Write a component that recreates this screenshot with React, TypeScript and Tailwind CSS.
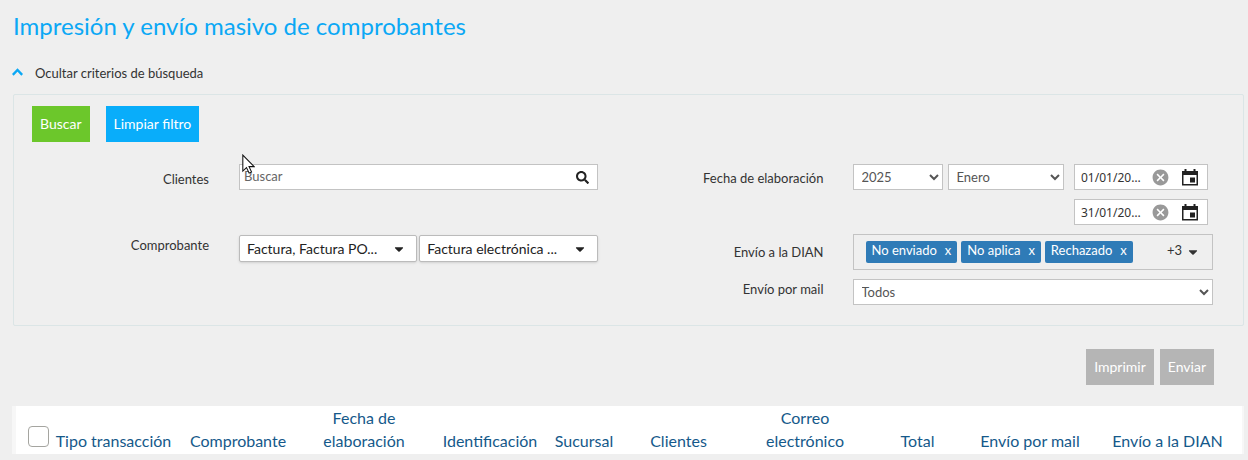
import React, { useState } from 'react';
import { FaCaretDown, FaSearch } from 'react-icons/fa';
import { MdCancel } from 'react-icons/md';

const columns = [
  { title: 'Tipo transacción', width: 'w-[123px]' },
  { title: 'Comprobante', width: 'w-[126px]' },
  { title: 'Fecha de elaboración', width: 'w-[126px]' },
  { title: 'Identificación', width: 'w-[126px]' },
  { title: 'Sucursal', width: 'w-[62px]' },
  { title: 'Clientes', width: 'w-[127px]' },
  { title: 'Correo electrónico', width: 'w-[126px]' },
  { title: 'Total', width: 'w-[99px]' },
  { title: 'Envío por mail', width: 'w-[126px]' },
  { title: 'Envío a la DIAN', width: 'w-[149px]' },
];

const labelClass = 'w-[195px] shrink-0 text-right text-[13px] leading-5 text-[#333]';
const selectClass = 'h-[26px] border border-[#c3c3c3] bg-white pl-1 text-[13px] text-[#555]';

const CalendarIcon: React.FC = () => (
  <svg viewBox="0 0 16 17" className="h-[17px] w-4">
    <path d="M0 2h16v14.5H0zM1.5 6v9h13V6z" fill="#222" fillRule="evenodd" />
    <path d="M2.5 0h2v3h-2zM11.5 0h2v3h-2zM8 8.5h5v5H8z" fill="#222" />
  </svg>
);

const DateField: React.FC<{ id: string; label: string; initial: string }> = ({ id, label, initial }) => {
  const [value, setValue] = useState(initial);

  return (
    <div className="flex h-[26px] w-[134px] items-center border border-[#c3c3c3] bg-white pl-1.5 pr-[9px]">
      <input
        id={id}
        aria-label={label}
        value={value}
        onChange={(e) => setValue(e.target.value)}
        className="mr-2 w-0 flex-1 text-ellipsis pt-0.5 font-['Noto_Sans'] text-xs text-[#333] outline-none"
      />
      <button type="button" aria-label="Borrar fecha" onClick={() => setValue('')} className="mr-3">
        <MdCancel className="size-[19px] text-[#999]" />
      </button>
      <button type="button" aria-label="Abrir calendario">
        <CalendarIcon />
      </button>
    </div>
  );
};

const DropdownButton: React.FC<{ id?: string; text: string }> = ({ id, text }) => (
  <button
    id={id}
    type="button"
    className="flex h-[27px] w-0 flex-1 items-center justify-between rounded-xs border border-[#bbb] bg-white pl-[7px] pr-2.5 text-sm text-[#222] shadow-sm"
  >
    <span className="truncate">{text}</span>
    <FaCaretDown className="size-3.5" />
  </button>
);

const App: React.FC = () => {
  const [open, setOpen] = useState(true);
  const [tags, setTags] = useState(['No enviado', 'No aplica', 'Rechazado']);

  return (
    <div className="relative min-h-screen bg-[#efefef] pl-3 pr-1 font-['Lato',sans-serif]">
      <h1 className="pl-px pt-2 text-2xl leading-9 text-[#0ba8f5]">Impresión y envío masivo de comprobantes</h1>

      <button
        type="button"
        onClick={() => setOpen(!open)}
        className="mt-5 flex h-5 items-center gap-3 text-[13px] text-[#333]"
      >
        <svg viewBox="0 0 11 8" className="mb-1 h-2 w-[11px]" fill="none" stroke="#0ba8f5" strokeWidth="2.4">
          <path d="M.8 6.8 5.5 2 10.2 6.8" />
        </svg>
        Ocultar criterios de búsqueda
      </button>

      {open && (
        <form className="ml-px mt-2.5 rounded-xs border border-[#dbe5e6] pb-5 pt-[11px]" onSubmit={(e) => e.preventDefault()}>
          <div className="flex gap-4 pl-[18px] text-sm text-white">
            <button type="submit" className="h-9 bg-[#6cc72b] px-2">Buscar</button>
            <button type="reset" className="h-9 bg-[#09adfa] px-2">Limpiar filtro</button>
          </div>

          <div className="mt-[22px] grid grid-cols-2">
            <div className="flex flex-col gap-[45px] pr-[31px]">
              <div className="flex gap-[30px]">
                <label htmlFor="clientes" className={`${labelClass} pt-[5px]`}>Clientes</label>
                <div className="flex h-[26px] flex-1 items-center border border-[#c3c3c3] bg-white pl-1 pr-2">
                  <input
                    id="clientes"
                    placeholder="Buscar"
                    className="w-0 flex-1 text-[13px] outline-none placeholder:text-[#666]"
                  />
                  <button type="button" aria-label="Buscar cliente">
                    <FaSearch className="size-[13px] text-[#222]" />
                  </button>
                </div>
              </div>
              <div className="flex gap-[30px]">
                <label htmlFor="comprobante" className={labelClass}>Comprobante</label>
                <div className="flex flex-1 gap-0.5">
                  <DropdownButton id="comprobante" text="Factura, Factura PO..." />
                  <DropdownButton text="Factura electrónica ..." />
                </div>
              </div>
            </div>

            <div className="flex flex-col gap-[9px] pr-[30px]">
              <div className="flex gap-[29px]">
                <label htmlFor="anio" className={`${labelClass} pt-1`}>Fecha de elaboración</label>
                <div className="flex flex-1 pr-[5px]">
                  <select id="anio" className={`${selectClass} w-[90px]`}>
                    <option>2025</option>
                  </select>
                  <select aria-label="Mes" className={`${selectClass} ml-[5px] mr-2.5 w-0 flex-1`}>
                    <option>Enero</option>
                  </select>
                  <div className="flex flex-col gap-[9px]">
                    <DateField id="desde" label="Desde" initial="01/01/2025" />
                    <DateField id="hasta" label="Hasta" initial="31/01/2025" />
                  </div>
                </div>
              </div>

              <div className="flex items-center gap-[29px]">
                <label htmlFor="dian" className={labelClass}>Envío a la DIAN</label>
                <div className="flex h-9 flex-1 items-start gap-1 border border-[#c3c3c3] pl-3 pr-3 pt-1.5">
                  {tags.map((tag) => (
                    <span key={tag} className="flex h-[22px] items-center gap-2 rounded-xs bg-[#2f7bb7] px-1.5 pb-0.5 text-[13px] text-white">
                      {tag}
                      <button type="button" aria-label={`Quitar ${tag}`} onClick={() => setTags(tags.filter((x) => x !== tag))}>
                        x
                      </button>
                    </span>
                  ))}
                  <button id="dian" type="button" className="ml-auto flex items-center gap-1 text-[13px] text-[#333]">
                    +3
                    <FaCaretDown className="mt-0.5 size-3.5" />
                  </button>
                </div>
              </div>

              <div className="flex gap-[29px]">
                <label htmlFor="mail" className={labelClass}>Envío por mail</label>
                <select id="mail" className={`${selectClass} flex-1`}>
                  <option>Todos</option>
                </select>
              </div>
            </div>
          </div>
        </form>
      )}

      <div className="mt-[23px] flex justify-end gap-1.5 pr-[30px] text-sm text-white">
        <button type="button" className="h-9 bg-[#b5b5b5] px-2">Imprimir</button>
        <button type="button" className="h-9 bg-[#b5b5b5] px-2">Enviar</button>
      </div>

      <div className="mt-[21px] border-l-4 border-r-2 border-[#f7f7f7] bg-white">
        <table className="w-full table-fixed text-base leading-[23px] text-[#15598a]">
          <thead>
            <tr className="h-12 align-bottom">
              <th className="w-9 pb-[7px] pl-3 text-left">
                <input
                  type="checkbox"
                  aria-label="Seleccionar todos"
                  className="block size-[21px] appearance-none rounded-sm border border-[#a5a5a0] bg-white checked:bg-[#09adfa]"
                />
              </th>
              {columns.map((col) => (
                <th key={col.title} className={`${col.width} pb-0.5 font-normal`}>{col.title}</th>
              ))}
            </tr>
          </thead>
        </table>
      </div>

      <svg viewBox="0 0 12 19" className="pointer-events-none absolute left-[242px] top-[154px] h-5 w-[13px]" fill="#fff" stroke="#111" strokeWidth="1">
        <path d="M.6 1v15.2l3.5-3.3 2.5 5.3 2.3-1-2.4-5.2h4.9z" />
      </svg>
    </div>
  );
};

export default App;
